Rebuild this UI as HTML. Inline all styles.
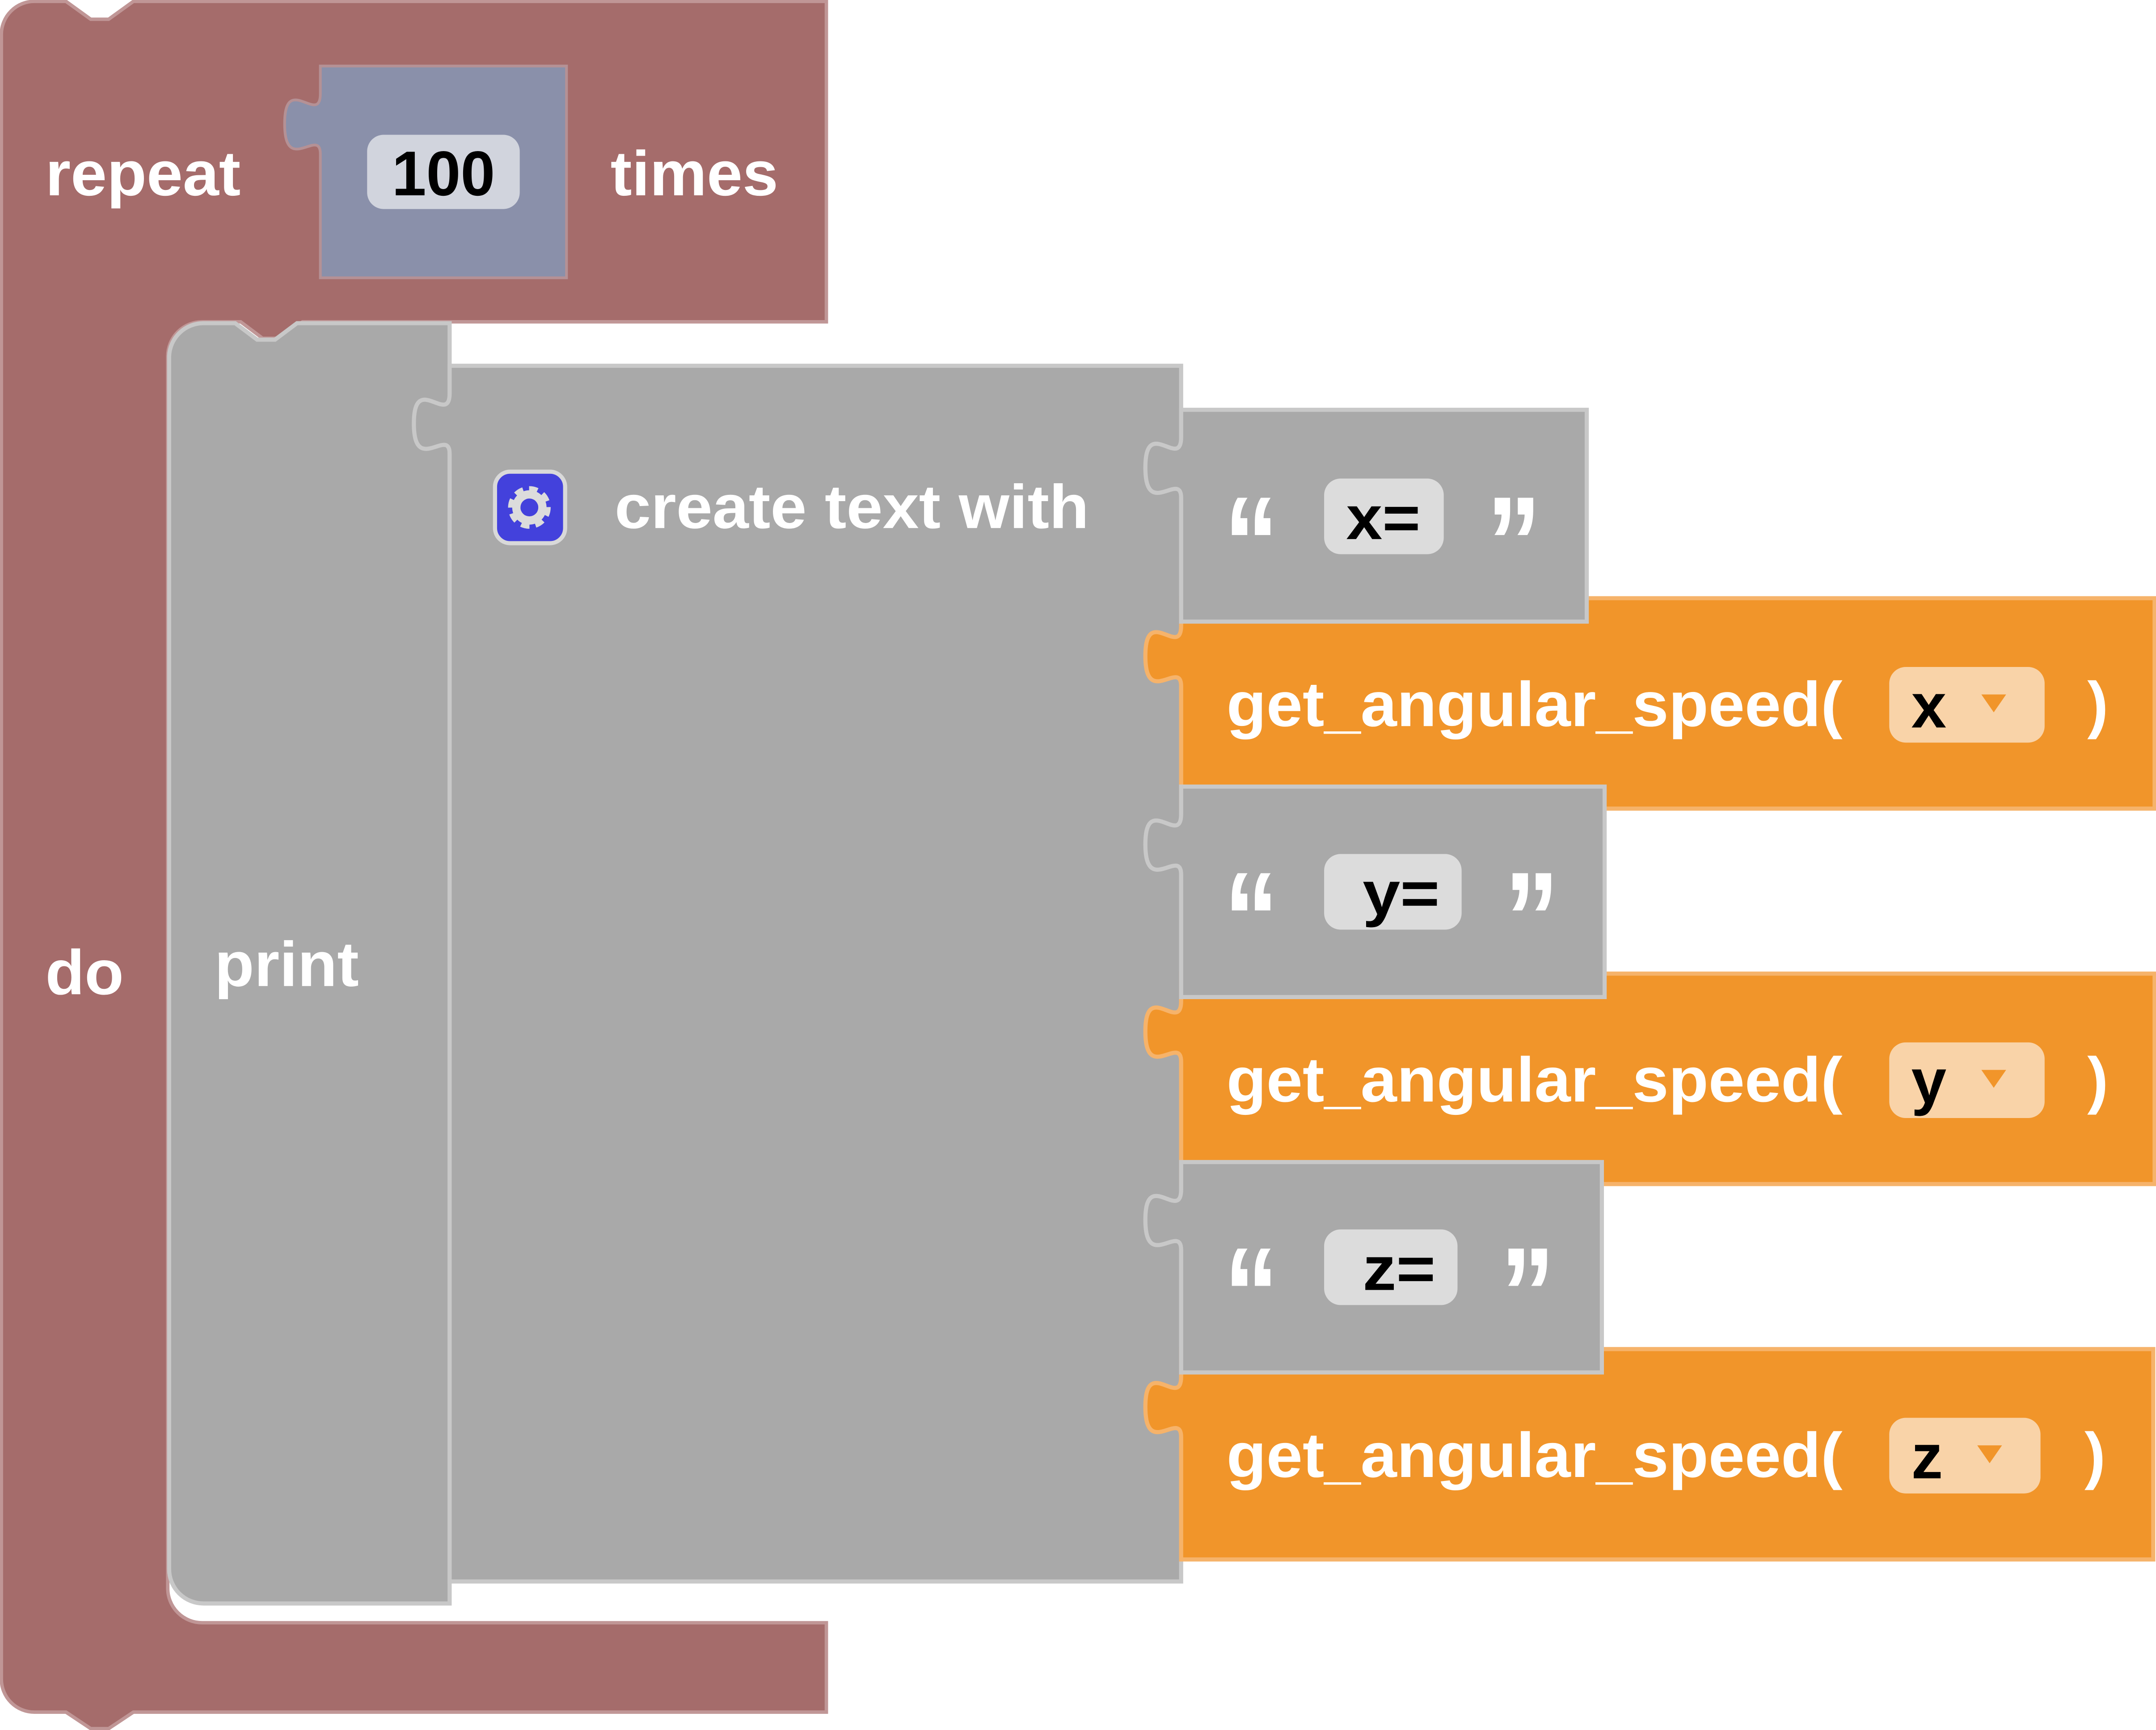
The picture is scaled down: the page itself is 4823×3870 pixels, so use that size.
<!DOCTYPE html>
<html><head><meta charset="utf-8"><style>
html,body{margin:0;padding:0;background:#fff}
svg{display:block}
text{font-family:"Liberation Sans",sans-serif;font-weight:bold}
</style></head><body>
<svg width="4823" height="3870" viewBox="0 0 1568 1258" preserveAspectRatio="none" xmlns="http://www.w3.org/2000/svg">
<path d="M1,25 A24,24 0 0 1 25,1 H48 l18,13 h13 l18,-13 H601 V234 H220 l-16,12 h-13 l-16,-12 H147 A25,25 0 0 0 122,259 V1155 A25,25 0 0 0 147,1180 H601 V1245 H97 l-18,12 h-13 l-18,-12 H25 A24,24 0 0 1 1,1221 Z" fill="#a56c6b" stroke="#c09696" stroke-width="2.5"/>
<text x="33" y="142" font-size="46" fill="#fff" textLength="142" lengthAdjust="spacingAndGlyphs">repeat</text>
<text x="444" y="142" font-size="46" fill="#fff" textLength="122" lengthAdjust="spacingAndGlyphs">times</text>
<text x="33" y="723" font-size="46" fill="#fff" textLength="57" lengthAdjust="spacingAndGlyphs">do</text>
<path d="M233,48 H412 V202 H233 V112 c0,-20 -26,16 -26,-22 s26,2 26,-22 Z" fill="#8a90aa" stroke="#b59195" stroke-width="2"/>
<rect x="267" y="98" width="111" height="54" rx="12" fill="#d1d4dd"/>
<text x="285" y="142" font-size="46" fill="#000" textLength="75" lengthAdjust="spacingAndGlyphs">100</text>
<path d="M123,259 A25,25 0 0 1 148,235 H171 l16,12 h13 l16,-12 H327 V1166 H148 A25,25 0 0 1 123,1141 Z" fill="#a9a9a9" stroke="#c8c8c8" stroke-width="3"/>
<text x="156" y="717" font-size="46" fill="#fff" textLength="105" lengthAdjust="spacingAndGlyphs">print</text>
<path d="M327,266 H859 V1150 H327 V330 c0,-20 -26,16 -26,-22 s26,2 26,-22 Z" fill="#a9a9a9" stroke="#c8c8c8" stroke-width="3"/>
<rect x="360" y="343" width="51" height="52" rx="11" fill="#4341dc" stroke="#d9d9d9" stroke-width="3"/>
<circle cx="385" cy="369" r="11" fill="none" stroke="#dcdcdc" stroke-width="9" stroke-dasharray="5 3.6"/>
<circle cx="385" cy="369" r="9.5" fill="none" stroke="#dcdcdc" stroke-width="6"/>
<circle cx="385" cy="369" r="6" fill="#4341dc"/>
<text x="447" y="384" font-size="45" fill="#fff" textLength="345" lengthAdjust="spacingAndGlyphs">create text with</text>
<g fill="#f1952a" stroke="#f6b36a" stroke-width="3">
<path d="M859,435 H1567 V588 H859 V499 c0,-20 -26,16 -26,-22 s26,2 26,-22 Z"/>
<path d="M859,708 H1567 V861 H859 V772 c0,-20 -26,16 -26,-22 s26,2 26,-22 Z"/>
<path d="M859,981 H1566 V1134 H859 V1045 c0,-20 -26,16 -26,-22 s26,2 26,-22 Z"/>
</g>
<g fill="#a9a9a9" stroke="#c8c8c8" stroke-width="3">
<path d="M859,298 H1154 V452 H859 V362 c0,-20 -26,16 -26,-22 s26,2 26,-22 Z"/>
<path d="M859,572 H1167 V725 H859 V636 c0,-20 -26,16 -26,-22 s26,2 26,-22 Z"/>
<path d="M859,845 H1165 V998 H859 V909 c0,-20 -26,16 -26,-22 s26,2 26,-22 Z"/>
</g>
<g fill="#fff" font-size="96">
<text x="890" y="428" textLength="40" lengthAdjust="spacingAndGlyphs">“</text>
<text x="1081" y="428" textLength="40" lengthAdjust="spacingAndGlyphs">”</text>
<text x="890" y="701" textLength="40" lengthAdjust="spacingAndGlyphs">“</text>
<text x="1094" y="701" textLength="40" lengthAdjust="spacingAndGlyphs">”</text>
<text x="890" y="974" textLength="40" lengthAdjust="spacingAndGlyphs">“</text>
<text x="1091" y="974" textLength="40" lengthAdjust="spacingAndGlyphs">”</text>
</g>
<g fill="#dcdcdc">
<rect x="963" y="348" width="87" height="55" rx="12"/>
<rect x="963" y="621" width="100" height="55" rx="12"/>
<rect x="963" y="894" width="97" height="55" rx="12"/>
</g>
<g font-size="45" fill="#000">
<text x="979" y="392" textLength="54" lengthAdjust="spacingAndGlyphs">x=</text>
<text x="991" y="665" textLength="56" lengthAdjust="spacingAndGlyphs">y=</text>
<text x="991" y="938" textLength="53" lengthAdjust="spacingAndGlyphs">z=</text>
</g>
<g font-size="46" fill="#fff">
<text x="892" y="528" textLength="448" lengthAdjust="spacingAndGlyphs">get_angular_speed(</text>
<text x="1518" y="528">)</text>
<text x="892" y="801" textLength="448" lengthAdjust="spacingAndGlyphs">get_angular_speed(</text>
<text x="1518" y="801">)</text>
<text x="892" y="1074" textLength="448" lengthAdjust="spacingAndGlyphs">get_angular_speed(</text>
<text x="1516" y="1074">)</text>
</g>
<g fill="#f9d3a8">
<rect x="1374" y="485" width="113" height="55" rx="12"/>
<rect x="1374" y="758" width="113" height="55" rx="12"/>
<rect x="1374" y="1031" width="110" height="55" rx="12"/>
</g>
<g font-size="46" fill="#000">
<text x="1390" y="529">x</text>
<text x="1390" y="802">y</text>
<text x="1390" y="1075">z</text>
</g>
<g fill="#f1952a">
<path d="M1441,505 h18 l-9,13 Z"/>
<path d="M1441,778 h18 l-9,13 Z"/>
<path d="M1438,1051 h18 l-9,13 Z"/>
</g>
</svg>
</body></html>
